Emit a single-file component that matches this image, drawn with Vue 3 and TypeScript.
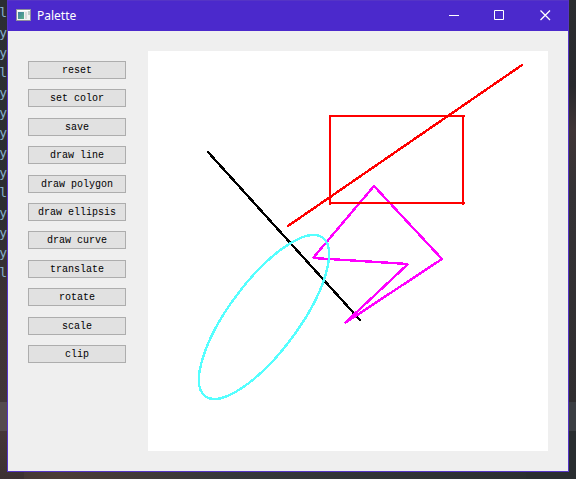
<script setup lang="ts">
const tools: string[] = [
  'reset', 'set color', 'save', 'draw line', 'draw polygon', 'draw ellipsis',
  'draw curve', 'translate', 'rotate', 'scale', 'clip',
]
const editorLines: string[] = ['l', 'y', 'y', 'l', 'y', 'y', 'y', 'y', 'y', 'l', 'y', 'y', 'y', 'l']
</script>

<template>
  <div class="desktop">
    <div class="editor" aria-hidden="true">
      <span v-for="(line, i) in editorLines" :key="i" class="editor-line">{{ line }}</span>
    </div>
    <main class="window">
      <header class="titlebar">
        <svg class="app-icon" width="16" height="16" viewBox="0 0 16 16">
          <defs>
            <linearGradient id="appPane" x1="0" y1="0" x2="1" y2="1">
              <stop offset="0" stop-color="#3f7fa0" />
              <stop offset="1" stop-color="#5cb08a" />
            </linearGradient>
          </defs>
          <rect x="0.5" y="1.5" width="14" height="11" fill="#f4f4f4" stroke="#8f8f9c" />
          <rect x="1" y="2" width="13" height="1" fill="#ffffff" />
          <rect x="2" y="4" width="6" height="7" fill="url(#appPane)" />
          <rect x="9" y="4" width="2" height="7" fill="#dcdcdc" />
          <rect x="12" y="3" width="2" height="4" fill="#c4d2cc" />
        </svg>
        <h1 class="title">Palette</h1>
        <div class="controls">
          <button class="control" type="button" aria-label="Minimize">
            <svg width="11" height="11" viewBox="0 0 11 11"><path d="M1 5.5H11" /></svg>
          </button>
          <button class="control" type="button" aria-label="Maximize">
            <svg width="11" height="11" viewBox="0 0 11 11"><path d="M0.5 0.5H9.5V9.5H0.5Z" /></svg>
          </button>
          <button class="control" type="button" aria-label="Close">
            <svg width="11" height="11" viewBox="0 0 11 11"><path stroke-width="1.3" d="M0.5 0.5L10 10M10 0.5L0.5 10" /></svg>
          </button>
        </div>
      </header>
      <div class="content">
        <nav class="tools">
          <button v-for="tool in tools" :key="tool" class="tool" type="button">{{ tool }}</button>
        </nav>
        <svg class="canvas" viewBox="0 0 400 400" role="img" aria-label="Drawing">
          <g fill="none" stroke-width="2.4" stroke-linecap="square" shape-rendering="crispEdges">
            <path d="M60 101L212 269" stroke="#000000" />
            <path d="M140 175L374 14" stroke="#ff0000" />
            <path d="M226 135L294 208L197 272L260 213L165 207Z" stroke="#ff00ff" stroke-linejoin="bevel" />
            <path d="M182 65H316M182 65V153M182 152H316M315 65V153" stroke="#ff0000" stroke-width="2" />
            <ellipse cx="116" cy="266" rx="98.6" ry="34.9" transform="rotate(-53.5 116 266)" stroke="#55ffff" />
          </g>
        </svg>
      </div>
    </main>
  </div>
</template>

<style>
body {
  margin: 0;
}
</style>

<style scoped>
.desktop {
  display: grid;
  grid-template-columns: 7px minmax(0, 1fr) 7px;
  align-items: start;
  box-sizing: border-box;
  min-height: 100vh;
  padding-bottom: 7px;
  background:
    linear-gradient(#2b2d30, #28292d 18%, #3f3536 27%, #343235 40%, #302e30 84%, #3b3e43 84%, #3b3e43 90%, #292d30 90%) right / 50px 100% no-repeat,
    linear-gradient(#2b2e33, #2d2d31 45%, #3d3234 62%, #413638 84%, #544a4e 84%, #544a4e 90%, #453638 90%, #3b3032) left / 24px 100% no-repeat,
    linear-gradient(90deg, #403536, #4b3b36 10%, #35373a 40%, #292d30);
}

.editor {
  display: flex;
  flex-direction: column;
  align-items: flex-end;
  padding-top: 3px;
  overflow: hidden;
  color: #86adcb;
  font: 13px/20px "DejaVu Sans Mono", monospace;
}

.window {
  border: 1px solid #5534c6;
  background: #efefef;
}

.titlebar {
  display: flex;
  align-items: center;
  height: 30px;
  padding-left: 8px;
  background: #4b29cc;
  color: #ffffff;
}

.app-icon {
  flex: none;
}

.title {
  flex: 1;
  margin: 0;
  padding-left: 5px;
  font: 400 12px/18px "Noto Sans", "Open Sans", sans-serif;
}

.controls {
  display: flex;
  align-self: stretch;
}

.control {
  display: flex;
  align-items: center;
  justify-content: center;
  width: 46px;
  padding: 0 0 2px;
  border: 0;
  background: transparent;
}

.control svg {
  fill: none;
  stroke: #ffffff;
}

.content {
  display: flex;
  align-items: flex-start;
  gap: 22px;
  padding: 20px;
}

.tools {
  display: flex;
  flex: none;
  flex-direction: column;
  justify-content: space-between;
  width: 98px;
  height: 302px;
  padding-top: 10px;
}

.tool {
  height: 18px;
  padding: 2px 0 0;
  border: 1px solid #adadad;
  background: #e1e1e1;
  color: #000000;
  font: 10px/14px "Liberation Mono", monospace;
}

.canvas {
  flex: 1;
  min-width: 0;
  background: #ffffff;
}
</style>
